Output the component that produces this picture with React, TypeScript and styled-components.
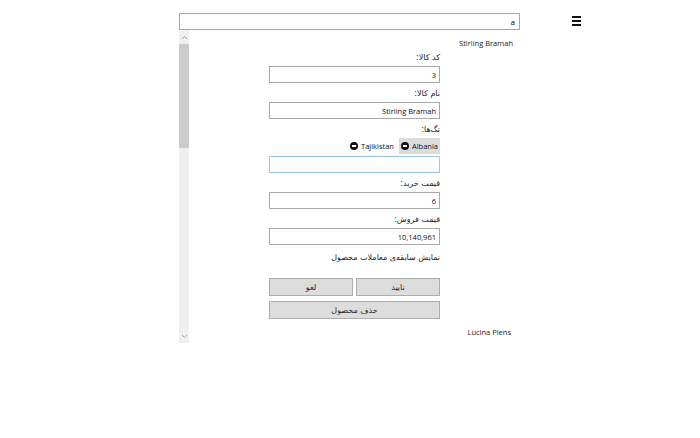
import React from "react";
import styled, { createGlobalStyle } from "styled-components";

const GlobalStyle = createGlobalStyle`
  body {
    margin: 0;
    background: #ffffff;
    font-family: "Segoe UI", "Open Sans", "DejaVu Sans", sans-serif;
    color: #222;
  }
`;

const Page = styled.div`
  width: 700px;
  height: 438px;
  padding: 13px 0 0 179px;
  box-sizing: border-box;
`;

const TopBar = styled.div`
  display: flex;
  align-items: flex-start;
`;

const Column = styled.div`
  width: 341px;
  display: flex;
  flex-direction: column;
`;

const SearchInput = styled.input`
  width: 341px;
  height: 17px;
  box-sizing: border-box;
  border: 1px solid #a9a9a9;
  direction: rtl;
  font: 8px "Open Sans", "DejaVu Sans", sans-serif;
  padding: 0 4px;
  color: #000;
  outline: none;
`;

const Burger = styled.div`
  margin: 3px 0 0 52px;
  width: 9px;
  display: flex;
  flex-direction: column;
  gap: 2px;
  span {
    display: block;
    height: 2px;
    background: #111;
  }
`;

const ListPanel = styled.div`
  display: flex;
  height: 313px;
`;

const ScrollBar = styled.div`
  width: 10px;
  background: #f0f0f0;
  display: flex;
  flex-direction: column;
  align-items: center;
  flex-shrink: 0;
`;

const Arrow = styled.div`
  height: 14px;
  display: flex;
  align-items: center;
  justify-content: center;
  color: #a3a3a3;
`;

const Thumb = styled.div`
  width: 10px;
  height: 104px;
  background: #cdcdcd;
`;

const Track = styled.div`
  flex: 1;
`;

const ListBody = styled.div`
  flex: 1;
  direction: rtl;
  display: flex;
  flex-direction: column;
`;

const ItemName = styled.div<{ $pad: number; $top: number }>`
  font: 7.5px/12px "Open Sans", "DejaVu Sans", sans-serif;
  height: 12px;
  color: #1a1a1a;
  padding: 0 ${(p) => p.$pad}px 0 0;
  margin-top: ${(p) => p.$top}px;
`;

const Form = styled.div`
  width: 171px;
  align-self: center;
  display: flex;
  flex-direction: column;
`;

const Label = styled.div<{ $top?: number }>`
  font: 8px/12px "DejaVu Sans", sans-serif;
  height: 12px;
  color: #222;
  margin-top: ${(p) => p.$top ?? 5}px;
  margin-bottom: 2px;
`;

const Field = styled.input<{ $focused?: boolean }>`
  display: block;
  width: 171px;
  height: 17px;
  box-sizing: border-box;
  border: 1px solid ${(p) => (p.$focused ? "#99c8ee" : "#a9a9a9")};
  direction: rtl;
  font: 7.5px "Open Sans", "DejaVu Sans", sans-serif;
  padding: 0 3px;
  color: #111;
  outline: none;
  background: #fff;
  margin: 0;
`;

const Tags = styled.div`
  display: flex;
  gap: 3px;
  height: 16px;
  margin-bottom: 2px;
`;

const Chip = styled.div<{ $active?: boolean }>`
  display: flex;
  align-items: center;
  gap: 3px;
  padding: 0 2px;
  background: ${(p) => (p.$active ? "#dcdcdc" : "transparent")};
  font: 7.5px "Open Sans", "DejaVu Sans", sans-serif;
  color: #111;
  direction: ltr;
`;

const Minus = styled.span`
  width: 8px;
  height: 8px;
  border-radius: 50%;
  background: #111;
  display: flex;
  align-items: center;
  justify-content: center;
  &::after {
    content: "";
    width: 4px;
    height: 1.5px;
    background: #fff;
  }
`;

const History = styled.div`
  font: 8px/12px "DejaVu Sans", sans-serif;
  height: 12px;
  color: #222;
  margin-top: 7px;
`;

const ButtonRow = styled.div<{ $top: number }>`
  display: flex;
  gap: 3px;
  margin-top: ${(p) => p.$top}px;
`;

const Button = styled.button`
  flex: 1;
  height: 18px;
  background: #dddddd;
  border: 1px solid #adadad;
  font: 8px "DejaVu Sans", sans-serif;
  color: #222;
  padding: 0;
`;

const UpChevron = () => (
  <svg width="7" height="5" viewBox="0 0 7 5">
    <path d="M1 4 L3.5 1.5 L6 4" stroke="currentColor" fill="none" strokeWidth="1" />
  </svg>
);

const DownChevron = () => (
  <svg width="7" height="5" viewBox="0 0 7 5">
    <path d="M1 1 L3.5 3.5 L6 1" stroke="currentColor" fill="none" strokeWidth="1" />
  </svg>
);

const App: React.FC = () => {
  return (
    <>
      <GlobalStyle />
      <Page>
        <TopBar>
          <Column>
            <SearchInput defaultValue="a" />
            <ListPanel>
              <ScrollBar>
                <Arrow>
                  <UpChevron />
                </Arrow>
                <Thumb />
                <Track />
                <Arrow>
                  <DownChevron />
                </Arrow>
              </ScrollBar>
              <ListBody>
                <ItemName $pad={7} $top={7}>
                  Stirling Bramah
                </ItemName>
                <Form>
                  <Label $top={3}>کد کالا:</Label>
                  <Field defaultValue="3" />
                  <Label>نام کالا:</Label>
                  <Field defaultValue="Stirling Bramah" />
                  <Label>تگ‌ها:</Label>
                  <Tags>
                    <Chip $active>
                      <Minus />
                      Albania
                    </Chip>
                    <Chip>
                      <Minus />
                      Tajikistan
                    </Chip>
                  </Tags>
                  <Field $focused />
                  <Label>قیمت خرید:</Label>
                  <Field defaultValue="6" />
                  <Label $top={5}>قیمت فروش:</Label>
                  <Field defaultValue="10,140,961" />
                  <History>نمایش سابقه‌ی معاملات محصول</History>
                  <ButtonRow $top={14}>
                    <Button>تایید</Button>
                    <Button>لغو</Button>
                  </ButtonRow>
                  <ButtonRow $top={5}>
                    <Button>حذف محصول</Button>
                  </ButtonRow>
                </Form>
                <ItemName $pad={9} $top={7}>
                  Lucina Piens
                </ItemName>
              </ListBody>
            </ListPanel>
          </Column>
          <Burger>
            <span />
            <span />
            <span />
          </Burger>
        </TopBar>
      </Page>
    </>
  );
};

export default App;
